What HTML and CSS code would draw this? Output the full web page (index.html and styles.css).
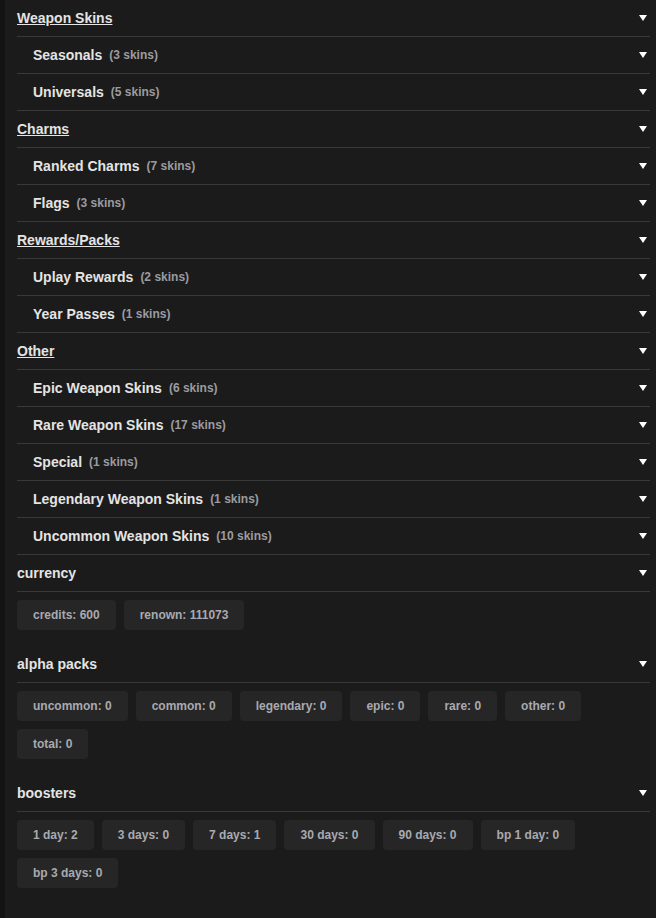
FILE: index.html
```html
<!DOCTYPE html>
<html lang="en">
<head>
<meta charset="utf-8" />
<meta name="viewport" content="width=device-width, initial-scale=1" />
<title>Inventory</title>
<link rel="stylesheet" href="styles.css">
</head>
<body>
<div class="inventory">

  <div class="row group"><span class="name">Weapon Skins</span><i class="caret"></i></div>
  <div class="row sub"><span class="name">Seasonals</span><span class="count">(3 skins)</span><i class="caret"></i></div>
  <div class="row sub"><span class="name">Universals</span><span class="count">(5 skins)</span><i class="caret"></i></div>

  <div class="row group"><span class="name">Charms</span><i class="caret"></i></div>
  <div class="row sub"><span class="name">Ranked Charms</span><span class="count">(7 skins)</span><i class="caret"></i></div>
  <div class="row sub"><span class="name">Flags</span><span class="count">(3 skins)</span><i class="caret"></i></div>

  <div class="row group"><span class="name">Rewards/Packs</span><i class="caret"></i></div>
  <div class="row sub"><span class="name">Uplay Rewards</span><span class="count">(2 skins)</span><i class="caret"></i></div>
  <div class="row sub"><span class="name">Year Passes</span><span class="count">(1 skins)</span><i class="caret"></i></div>

  <div class="row group"><span class="name">Other</span><i class="caret"></i></div>
  <div class="row sub"><span class="name">Epic Weapon Skins</span><span class="count">(6 skins)</span><i class="caret"></i></div>
  <div class="row sub"><span class="name">Rare Weapon Skins</span><span class="count">(17 skins)</span><i class="caret"></i></div>
  <div class="row sub"><span class="name">Special</span><span class="count">(1 skins)</span><i class="caret"></i></div>
  <div class="row sub"><span class="name">Legendary Weapon Skins</span><span class="count">(1 skins)</span><i class="caret"></i></div>
  <div class="row sub"><span class="name">Uncommon Weapon Skins</span><span class="count">(10 skins)</span><i class="caret"></i></div>

  <div class="row stat"><span class="name">currency</span><i class="caret"></i></div>
  <div class="chips">
    <span class="chip">credits: 600</span>
    <span class="chip">renown: 111073</span>
  </div>

  <div class="row stat"><span class="name">alpha packs</span><i class="caret"></i></div>
  <div class="chips">
    <span class="chip">uncommon: 0</span>
    <span class="chip">common: 0</span>
    <span class="chip">legendary: 0</span>
    <span class="chip">epic: 0</span>
    <span class="chip">rare: 0</span>
    <span class="chip">other: 0</span>
    <span class="chip">total: 0</span>
  </div>

  <div class="row stat"><span class="name">boosters</span><i class="caret"></i></div>
  <div class="chips">
    <span class="chip">1 day: 2</span>
    <span class="chip">3 days: 0</span>
    <span class="chip">7 days: 1</span>
    <span class="chip">30 days: 0</span>
    <span class="chip">90 days: 0</span>
    <span class="chip">bp 1 day: 0</span>
    <span class="chip">bp 3 days: 0</span>
  </div>

</div>
</body>
</html>
```

FILE: styles.css
```css
:root {
  --bg: #1b1b1b;
  --edge: #131313;
  --line: #393939;
  --chip: #262626;
  --text: #e4e4e4;
  --muted: #9c9ca0;
  --chip-text: #a9aab0;
}
*{box-sizing:border-box;margin:0;padding:0;}
html,body{background:var(--bg);}
body{
  font-family:"Liberation Sans",Arial,sans-serif;
  color:var(--text);
  border-left:5px solid var(--edge);
  min-height:100vh;
}
.inventory{padding:0 6px 32px 12px;}
.row{
  display:flex;
  align-items:center;
  height:37px;
  border-bottom:1px solid var(--line);
  font-size:14px;
  font-weight:700;
  line-height:36px;
}
.row .name{color:var(--text);}
.group .name{text-decoration:underline;}
.sub{padding-left:16px;}
.count{
  margin-left:7px;
  font-size:12px;
  color:var(--muted);
}
.caret{
  margin-left:auto;
  margin-right:3px;
  width:0;
  height:0;
  border-left:4px solid transparent;
  border-right:4px solid transparent;
  border-top:6px solid #fff;
}
.chips{
  display:flex;
  flex-wrap:wrap;
  gap:8px 8px;
  padding:8px 0 16px;
}
.chip{
  background:var(--chip);
  color:var(--chip-text);
  font-size:12px;
  font-weight:700;
  line-height:14px;
  padding:8px 16px;
  border-radius:4px;
}
```
